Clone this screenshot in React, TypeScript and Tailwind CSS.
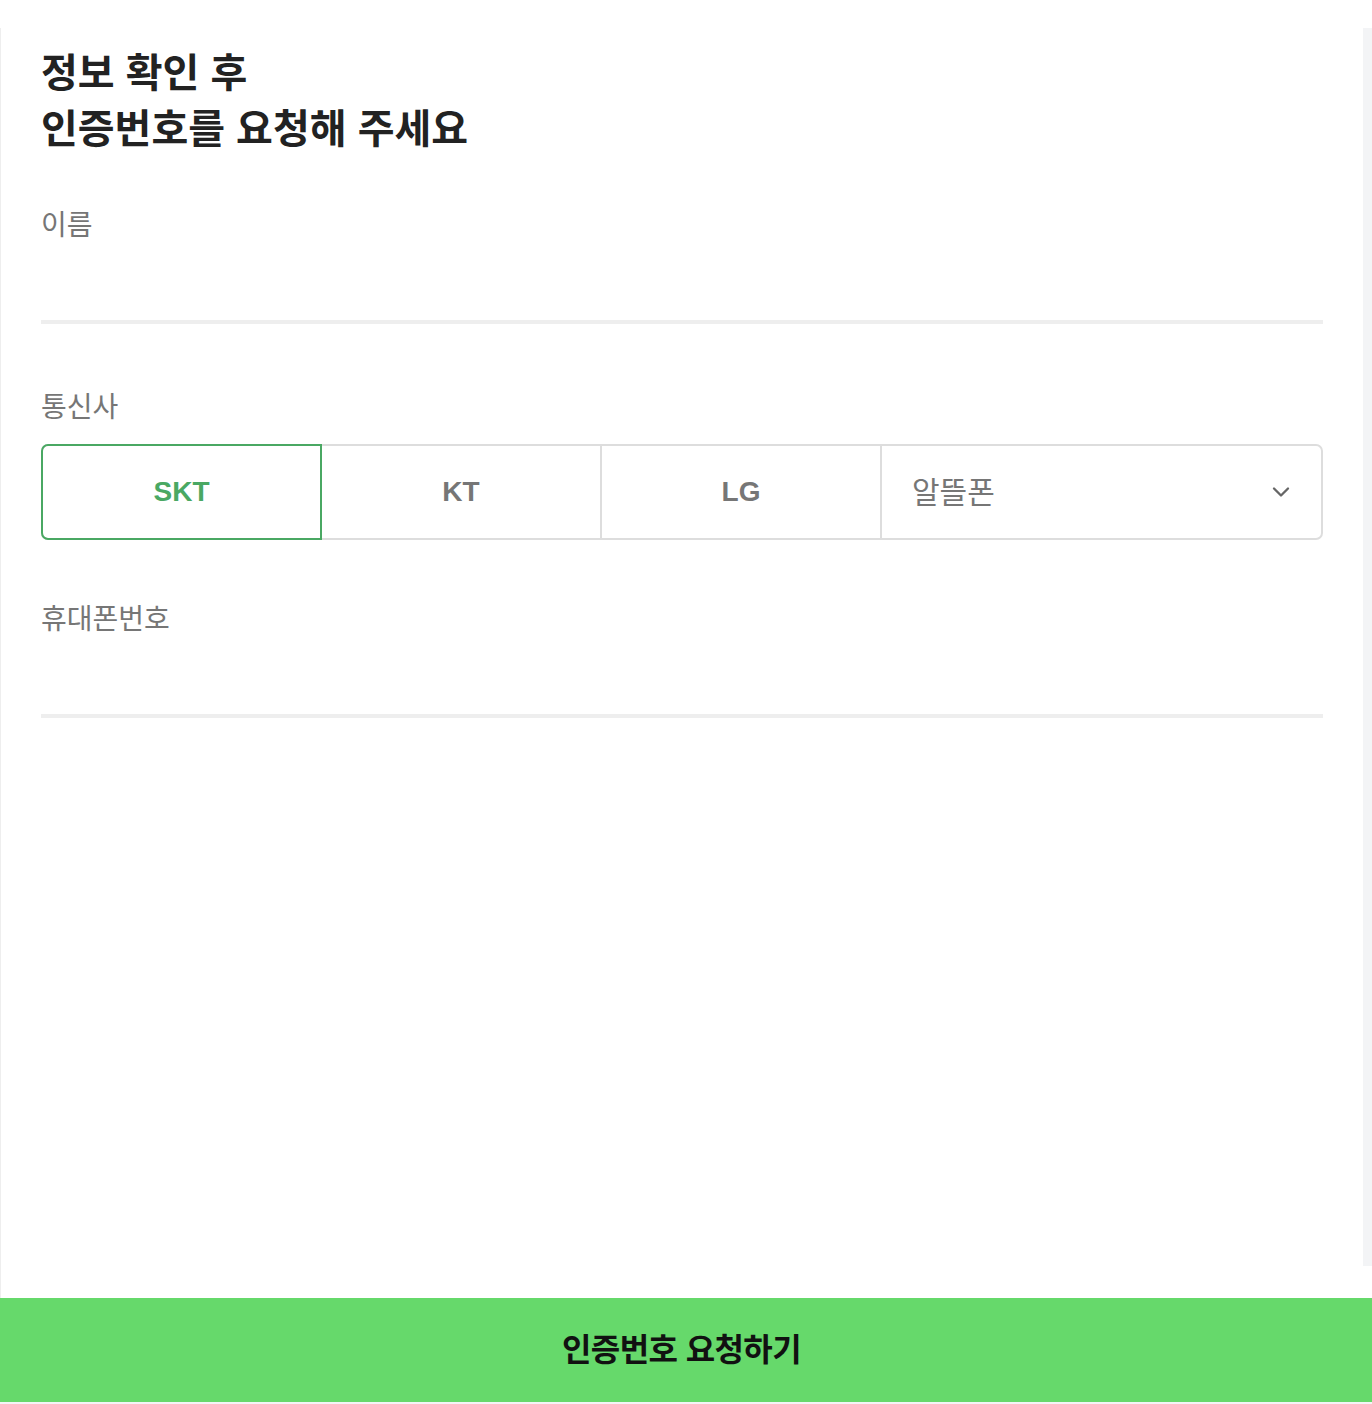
import { ChevronDown } from 'lucide-react';

const font = { fontFamily: '"Liberation Sans", "Noto Sans CJK KR", sans-serif' };

function Field({ label }: { label: string }) {
  return (
    <div className="flex flex-col">
      <div className="text-[28px] leading-[36px] text-[#767676]">{label}</div>
      <input
        className="h-[80px] border-b-4 border-[#eeeeee] bg-transparent text-[28px] text-[#222] outline-none"
        aria-label={label}
      />
    </div>
  );
}

export default function App() {
  const carriers = ['SKT', 'KT', 'LG'];
  return (
    <div className="flex h-[1404px] w-[1372px] flex-col bg-white" style={font}>
      <div className="mt-[28px] flex flex-1">
        <div className="flex flex-1 flex-col border-l border-[#eeeeee] pl-[40px] pr-[40px]">
          <h1 className="pt-[17px] text-[40px] font-bold leading-[56px] text-[#222222]">
            정보 확인 후
            <br />
            인증번호를 요청해 주세요
          </h1>

          <div className="mt-[51px]">
            <Field label="이름" />
          </div>

          <div className="mt-[66px] text-[28px] leading-[36px] text-[#767676]">통신사</div>
          <div className="mt-[18px] flex h-[96px] rounded-[7px] border-2 border-[#dddddd]">
            {carriers.map((c, i) => (
              <button
                key={c}
                className={
                  i === 0
                    ? '-my-[2px] -ml-[2px] flex w-[281px] items-center justify-center rounded-l-[7px] border-2 border-[#4aa863] text-[28px] font-bold text-[#4aa863]'
                    : 'flex w-[280px] items-center justify-center border-r-2 border-[#dddddd] text-[28px] font-bold text-[#767676]'
                }
              >
                {c}
              </button>
            ))}
            <div className="flex flex-1 items-center justify-between pl-[30px] pr-[26px]">
              <span className="text-[30px] text-[#767676]">알뜰폰</span>
              <ChevronDown className="h-[28px] w-[28px] text-[#666666]" strokeWidth={2} />
            </div>
          </div>

          <div className="mt-[62px]">
            <Field label="휴대폰번호" />
          </div>
        </div>
        <div className="mb-[32px] w-[9px] bg-[#f3f4f6]" />
      </div>

      <button className="flex h-[104px] w-full items-center justify-center bg-[#66d96b] pr-[9px] text-[32px] font-bold tracking-[-0.6px] text-[#111111]">
        인증번호 요청하기
      </button>
      <div className="h-[2px] bg-[#f3f4f6]" />
    </div>
  );
}
